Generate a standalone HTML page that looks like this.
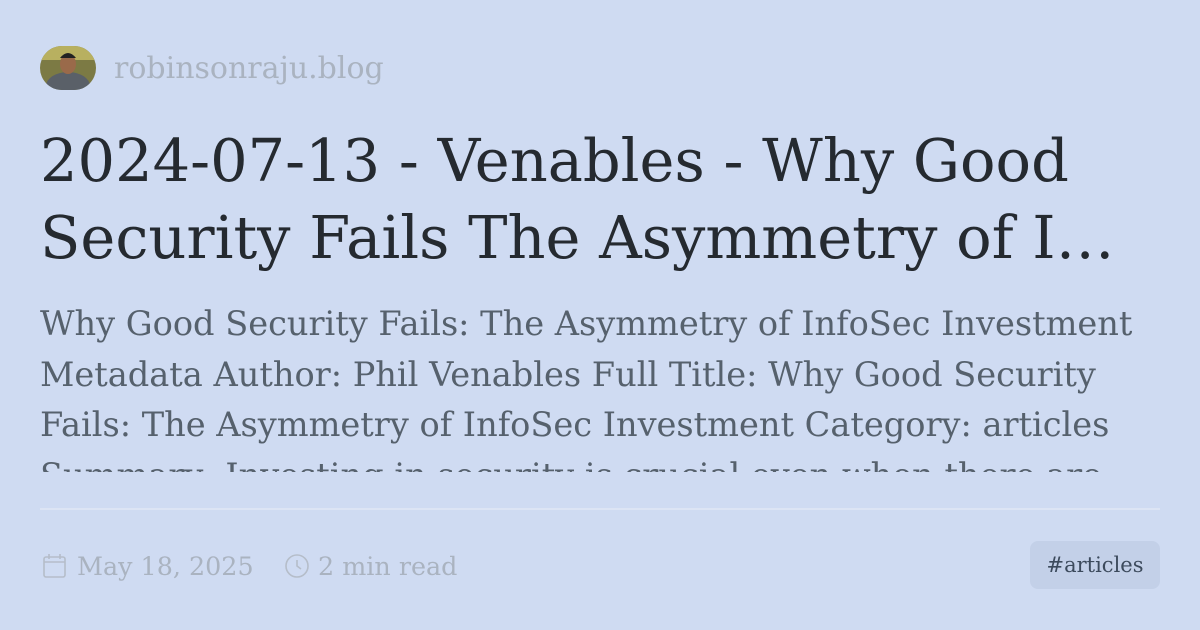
<!DOCTYPE html>
<html><head><meta charset="utf-8"><style>
*{margin:0;padding:0;box-sizing:border-box}
body{width:1200px;height:630px;background:#cfdbf2;font-family:"DejaVu Serif","Liberation Serif",serif;position:relative;overflow:hidden}
.av{position:absolute;left:40px;top:46px;width:56px;height:44px;border-radius:22px;overflow:hidden}
.site{position:absolute;left:114px;top:49px;font-size:30px;color:#aab3c0;line-height:40px}
.title{position:absolute;left:40px;top:122px;width:1150px;font-size:59px;line-height:77px;color:#252a30;white-space:nowrap}
.desc{position:absolute;left:40px;top:299px;width:1150px;height:173px;overflow:hidden;font-size:33.6px;line-height:50.5px;color:#56616d;white-space:nowrap}
.hr{position:absolute;left:40px;right:40px;top:508px;height:2px;background:#dce4f4}
.meta{position:absolute;top:546px;font-size:25.4px;color:#aab3c0;line-height:40px}
.tag{position:absolute;left:1030px;top:541px;width:130px;height:48px;border-radius:8px;background:#c3d0e8;color:#3c4a5c;font-size:21px;line-height:48px;text-align:center}
</style></head><body>
<div class="av"><svg width="56" height="44" viewBox="0 0 56 44"><rect width="56" height="44" fill="#7c7a44"/><rect x="0" y="0" width="56" height="14" fill="#b8b060"/><ellipse cx="28" cy="40" rx="22" ry="14" fill="#5a6068"/><ellipse cx="28" cy="18" rx="8" ry="10" fill="#9a6a4a"/><path d="M20 12 Q28 2 36 12" fill="#222"/></svg></div>
<div class="site">robinsonraju.blog</div>
<div class="title">2024-07-13 - Venables - Why Good<br>Security Fails The Asymmetry of I…</div>
<div class="desc">Why Good Security Fails: The Asymmetry of InfoSec Investment<br>Metadata Author: Phil Venables Full Title: Why Good Security<br>Fails: The Asymmetry of InfoSec Investment Category: articles<br>Summary: Investing in security is crucial even when there are</div>
<div class="hr"></div>
<svg style="position:absolute;left:43px;top:553px" width="24" height="26" viewBox="0 0 24 26" fill="none" stroke="#b5bdc9" stroke-width="1.6"><rect x="1" y="4" width="21" height="20" rx="2"/><line x1="1" y1="9" x2="22" y2="9"/><line x1="6" y1="1" x2="6" y2="6"/><line x1="17" y1="1" x2="17" y2="6"/></svg>
<div class="meta" style="left:77px">May 18, 2025</div>
<svg style="position:absolute;left:284px;top:553px" width="26" height="26" viewBox="0 0 26 26" fill="none" stroke="#b5bdc9" stroke-width="1.6"><circle cx="13" cy="13" r="11"/><path d="M13 7v6l4 3"/></svg>
<div class="meta" style="left:318px">2 min read</div>
<div class="tag">#articles</div>
</body></html>
